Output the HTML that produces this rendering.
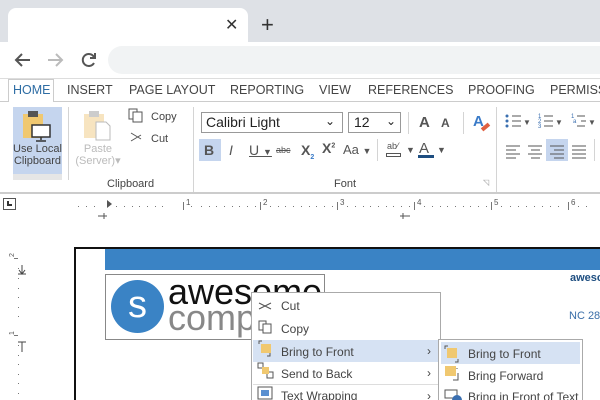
<!DOCTYPE html><html><head><style>
*{margin:0;padding:0;box-sizing:border-box}
html,body{width:600px;height:400px;overflow:hidden}
body{position:relative;font-family:"Liberation Sans",sans-serif;background:#fff;color:#444}
.a{position:absolute}
.t{font-size:12px;color:#444;white-space:nowrap}
.sep{position:absolute;width:1px;background:#d4d4d4}
</style></head><body>
<div class="a" style="left:0;top:0;width:600px;height:42px;background:#dee1e6"></div>
<div class="a" style="left:8px;top:8px;width:240px;height:36px;background:#fff;border-radius:8px 8px 0 0"></div>
<div class="a" style="left:225px;top:15px;font-size:16px;color:#333">✕</div>
<div class="a" style="left:261px;top:12px;font-size:22px;color:#333">+</div>
<svg class="a" style="left:12px;top:50px" width="90" height="20" viewBox="0 0 90 20"><g fill="none" stroke-width="2"><path d="M18 10H4M10 4L4 10l6 6" stroke="#555"/><path d="M36 10h14M44 4l6 6-6 6" stroke="#bbb"/><path d="M82 7a6 6 0 1 0 0 6" stroke="#555"/><path d="M83 3v5h-5" stroke="#555"/></g></svg>
<div class="a" style="left:108px;top:46px;width:492px;height:28px;background:#f1f3f4;border-radius:14px 0 0 14px"></div>
<div class="a" style="left:0;top:78px;width:600px;height:1px;background:#ddd"></div>
<div class="a" style="left:0;top:101px;width:600px;height:1px;background:#ccc"></div>
<div class="a" style="left:8px;top:79px;width:46px;height:23px;border:1px solid #ccc;border-bottom:none;background:#fff"></div>
<div class="a t" style="left:13px;top:83px;font-size:12.5px;color:#2e6da4">HOME</div>
<div class="a t" style="left:67px;top:83px;font-size:12.5px">INSERT</div>
<div class="a t" style="left:129px;top:83px;font-size:12.5px">PAGE LAYOUT</div>
<div class="a t" style="left:230px;top:83px;font-size:12.5px">REPORTING</div>
<div class="a t" style="left:319px;top:83px;font-size:12.5px">VIEW</div>
<div class="a t" style="left:368px;top:83px;font-size:12.5px">REFERENCES</div>
<div class="a t" style="left:468px;top:83px;font-size:12.5px">PROOFING</div>
<div class="a t" style="left:550px;top:83px;font-size:12.5px">PERMISSIONS</div>
<div class="a" style="left:13px;top:107px;width:49px;height:73px;background:#e6e6e6"></div>
<div class="a" style="left:13px;top:107px;width:49px;height:67px;background:#c5d5ee"></div>
<svg class="a" style="left:20px;top:110px" width="34" height="32"><rect x="3" y="4" width="20" height="24" fill="#f0c870"/><rect x="8" y="1" width="10" height="6" fill="#555"/><rect x="12" y="15" width="18" height="12" fill="#fff" stroke="#333" stroke-width="1.5"/><path d="M21 27v3M16 31h10" stroke="#333" stroke-width="1.5"/></svg>
<div class="a t" style="left:13px;top:143px;font-size:11px;width:49px;text-align:center;line-height:12px">Use Local<br>Clipboard</div>
<div class="sep" style="left:68px;top:107px;height:73px"></div>
<svg class="a" style="left:82px;top:110px" width="32" height="32"><rect x="2" y="4" width="20" height="24" fill="#f7e4c0"/><rect x="7" y="1" width="10" height="6" fill="#ccc"/><path d="M14 12h10l4 4v14H14z" fill="#fff" stroke="#bbb"/></svg>
<div class="a t" style="left:72px;top:143px;font-size:11px;width:52px;text-align:center;line-height:12px;color:#bbb">Paste<br>(Server)▾</div>
<svg class="a" style="left:128px;top:108px" width="16" height="40"><rect x="1" y="1" width="8" height="10" fill="none" stroke="#555"/><rect x="5" y="4" width="9" height="10" fill="#fff" stroke="#555"/><path d="M3 25l10 6M3 33l10-6" stroke="#555" fill="none"/></svg>
<div class="a t" style="left:151px;top:111px;font-size:11px">Copy</div>
<div class="a t" style="left:151px;top:133px;font-size:11px">Cut</div>
<div class="a t" style="left:107px;top:178px;font-size:11px">Clipboard</div>
<div class="sep" style="left:193px;top:107px;height:85px"></div>
<div class="a" style="left:201px;top:112px;width:142px;height:21px;border:1px solid #999"></div>
<div class="a t" style="left:206px;top:114px;font-size:14px;color:#222">Calibri Light</div>
<div class="a t" style="left:325px;top:114px;font-size:12px;color:#222">⌄</div>
<div class="a" style="left:348px;top:112px;width:53px;height:21px;border:1px solid #999"></div>
<div class="a t" style="left:354px;top:114px;font-size:14px;color:#222">12</div>
<div class="a t" style="left:386px;top:114px;font-size:12px;color:#222">⌄</div>
<div class="sep" style="left:408px;top:112px;height:22px"></div>
<div class="a t" style="left:419px;top:114px;font-size:15px;color:#555;font-weight:bold">A</div>
<div class="a t" style="left:441px;top:116px;font-size:12px;color:#555;font-weight:bold">A</div>
<div class="sep" style="left:463px;top:112px;height:22px"></div>
<div class="a t" style="left:473px;top:113px;font-size:15px;color:#3a7bc8;font-weight:bold">A</div>
<div class="a" style="left:481px;top:125px;width:9px;height:4px;background:#e06040;transform:rotate(-40deg)"></div>
<div class="a" style="left:199px;top:139px;width:22px;height:22px;background:#c5d5ee"></div>
<div class="a t" style="left:204px;top:142px;font-size:14px;font-weight:bold;color:#555">B</div>
<div class="a t" style="left:229px;top:142px;font-size:14px;font-style:italic;color:#555">I</div>
<div class="a t" style="left:249px;top:142px;font-size:14px;text-decoration:underline;color:#555">U <span style="font-size:9px">▼</span></div>
<div class="a t" style="left:276px;top:145px;font-size:9px;text-decoration:line-through;color:#555">abc</div>
<div class="a t" style="left:301px;top:142px;font-size:14px;color:#555;font-weight:bold">X<sub style="font-size:7px;color:#3a7bc8">2</sub></div>
<div class="a t" style="left:322px;top:140px;font-size:14px;color:#555;font-weight:bold">X<sup style="font-size:7px">2</sup></div>
<div class="a t" style="left:343px;top:142px;font-size:13px;color:#555">Aa <span style="font-size:9px">▼</span></div>
<div class="sep" style="left:377px;top:139px;height:22px"></div>
<div class="a t" style="left:387px;top:141px;font-size:9px;color:#555">ab⁄</div>
<div class="a" style="left:386px;top:153px;width:15px;height:4px;border:1px solid #555"></div>
<div class="a t" style="left:406px;top:145px;font-size:9px;color:#555">▼</div>
<div class="a t" style="left:419px;top:140px;font-size:15px;color:#555">A</div>
<div class="a" style="left:418px;top:155px;width:16px;height:3px;background:#1e4e80"></div>
<div class="a t" style="left:437px;top:145px;font-size:9px;color:#555">▼</div>
<div class="a t" style="left:334px;top:178px;font-size:11px">Font</div>
<div class="a t" style="left:483px;top:178px;font-size:8px;color:#999">◹</div>
<div class="sep" style="left:496px;top:107px;height:85px"></div>
<div class="a" style="left:546px;top:139px;width:22px;height:22px;background:#c5d5ee"></div>
<svg class="a" style="left:500px;top:110px" width="100" height="52"><g stroke="#555" fill="none">
<path d="M12 6h9M12 11h9M12 16h9M44 6h9M44 11h9M44 16h9M77 6h8M81 11h5M77 16h8"/>
<path d="M6 36h14M6 40h10M6 44h14M6 48h10M28 36h14M31 40h9M28 44h14M31 48h9M50 36h14M54 40h10M50 44h14M54 48h10M72 36h14M72 40h14M72 44h14M72 48h14"/></g>
<g fill="#3a6fb0"><circle cx="7" cy="6" r="1.5"/><circle cx="7" cy="11" r="1.5"/><circle cx="7" cy="16" r="1.5"/></g>
<g font-size="6" fill="#3a6fb0" font-family="Liberation Sans"><text x="38" y="8">1</text><text x="38" y="13">2</text><text x="38" y="18">3</text><text x="71" y="8">1</text><text x="73" y="13">a</text></g>
<g font-size="8" fill="#555"><text x="23" y="15">▼</text><text x="55" y="15">▼</text><text x="88" y="15">▼</text></g></svg>
<div class="sep" style="left:594px;top:139px;height:22px"></div>
<div class="a" style="left:0;top:192px;width:600px;height:2px;background:#ccc"></div>
<div class="a" style="left:3px;top:198px;width:13px;height:12px;border:1px solid #555"></div>
<div class="a" style="left:7px;top:201px;width:5px;height:5px;border-left:2px solid #333;border-bottom:2px solid #333"></div>
<svg class="a" style="left:70px;top:196px" width="530" height="24"><g fill="#777">
<rect x="8" y="10" width="1" height="1"/><rect x="16" y="10" width="1" height="1"/><rect x="24" y="10" width="1" height="1"/>
<rect x="46" y="10" width="1" height="1"/><rect x="54" y="10" width="1" height="1"/><rect x="62" y="10" width="1" height="1"/><rect x="69" y="10" width="1" height="1"/><rect x="77" y="10" width="1" height="1"/><rect x="85" y="10" width="1" height="1"/><rect x="92" y="10" width="1" height="1"/>
<rect x="121" y="10" width="1" height="1"/><rect x="131" y="10" width="1" height="1"/><rect x="139" y="10" width="1" height="1"/><rect x="146" y="10" width="1" height="1"/><rect x="154" y="10" width="1" height="1"/><rect x="162" y="10" width="1" height="1"/><rect x="169" y="10" width="1" height="1"/><rect x="177" y="10" width="1" height="1"/><rect x="185" y="10" width="1" height="1"/>
<rect x="200" y="10" width="1" height="1"/><rect x="208" y="10" width="1" height="1"/><rect x="215" y="10" width="1" height="1"/><rect x="223" y="10" width="1" height="1"/><rect x="231" y="10" width="1" height="1"/><rect x="239" y="10" width="1" height="1"/><rect x="246" y="10" width="1" height="1"/><rect x="254" y="10" width="1" height="1"/><rect x="262" y="10" width="1" height="1"/>
<rect x="277" y="10" width="1" height="1"/><rect x="285" y="10" width="1" height="1"/><rect x="293" y="10" width="1" height="1"/><rect x="300" y="10" width="1" height="1"/><rect x="308" y="10" width="1" height="1"/><rect x="316" y="10" width="1" height="1"/><rect x="323" y="10" width="1" height="1"/><rect x="331" y="10" width="1" height="1"/><rect x="339" y="10" width="1" height="1"/>
<rect x="354" y="10" width="1" height="1"/><rect x="362" y="10" width="1" height="1"/><rect x="370" y="10" width="1" height="1"/><rect x="377" y="10" width="1" height="1"/><rect x="385" y="10" width="1" height="1"/><rect x="393" y="10" width="1" height="1"/><rect x="400" y="10" width="1" height="1"/><rect x="408" y="10" width="1" height="1"/><rect x="416" y="10" width="1" height="1"/>
<rect x="431" y="10" width="1" height="1"/><rect x="440" y="10" width="1" height="1"/><rect x="448" y="10" width="1" height="1"/><rect x="456" y="10" width="1" height="1"/><rect x="464" y="10" width="1" height="1"/><rect x="472" y="10" width="1" height="1"/><rect x="480" y="10" width="1" height="1"/><rect x="488" y="10" width="1" height="1"/><rect x="508" y="10" width="1" height="1"/><rect x="516" y="10" width="1" height="1"/>
<rect x="113" y="6" width="1" height="8"/><rect x="190" y="6" width="1" height="8"/><rect x="267" y="6" width="1" height="8"/><rect x="344" y="6" width="1" height="8"/><rect x="421" y="6" width="1" height="8"/><rect x="498" y="6" width="1" height="8"/></g>
<g font-size="8" fill="#555" font-family="Liberation Sans"><text x="116" y="9">1</text><text x="193" y="9">2</text><text x="270" y="9">3</text><text x="347" y="9">4</text><text x="424" y="9">5</text><text x="501" y="9">6</text></g>
<path d="M37 4v8l5-4z" fill="#555"/><path d="M28 20h9M34 17v6" stroke="#555"/><path d="M330 20h10M333 17v6" stroke="#555"/></svg>
<svg class="a" style="left:5px;top:250px" width="30" height="150"><g fill="#777"><rect x="9" y="8" width="4" height="1"/><rect x="13" y="18" width="1" height="1"/><rect x="13" y="28" width="1" height="1"/><rect x="13" y="38" width="1" height="1"/><rect x="13" y="47" width="1" height="1"/><rect x="13" y="57" width="1" height="1"/><rect x="13" y="66" width="1" height="1"/><rect x="9" y="85" width="4" height="1"/><rect x="13" y="95" width="1" height="1"/><rect x="13" y="105" width="1" height="1"/><rect x="13" y="114" width="1" height="1"/><rect x="13" y="124" width="1" height="1"/><rect x="13" y="133" width="1" height="1"/><rect x="13" y="143" width="1" height="1"/></g>
<text x="3" y="7" font-size="7" fill="#555" transform="rotate(-90 6 4)">2</text><text x="3" y="85" font-size="7" fill="#555" transform="rotate(-90 6 82)">1</text>
<path d="M17 15v9M13 24h8M14 20l3 4 3-4" stroke="#444" fill="none"/><path d="M17 92v10M13 92h8" stroke="#444" fill="none"/></svg>
<div class="a" style="left:74px;top:247px;width:526px;height:153px;border:2px solid #111;border-right:none;border-bottom:none"></div>
<div class="a" style="left:105px;top:249px;width:495px;height:21px;background:#3a83c5"></div>
<div class="a" style="left:105px;top:274px;width:220px;height:66px;border:1px solid #888"></div>
<div class="a" style="left:111px;top:280px;width:53px;height:53px;border-radius:50%;background:#3a83c5;color:#fff;font-size:38px;text-align:center;line-height:50px">s</div>
<div class="a" style="left:168px;top:274px;font-size:36px;color:#111;line-height:36px;white-space:nowrap">awesome</div>
<div class="a" style="left:168px;top:300px;font-size:36px;color:#888;line-height:36px;white-space:nowrap">company</div>
<div class="a t" style="left:570px;top:272px;font-size:11px;color:#1e4e80;font-weight:bold">awesome</div>
<div class="a t" style="left:569px;top:310px;font-size:11px;color:#3a6ea8">NC 28</div>
<div class="a" style="left:251px;top:292px;width:190px;height:110px;background:#fff;border:1px solid #aaa"></div>
<div class="a" style="left:253px;top:340px;width:186px;height:22px;background:#d6e2f3"></div>
<div class="a" style="left:253px;top:384px;width:186px;height:1px;background:#ddd"></div>
<div class="a t" style="left:281px;top:299px">Cut</div>
<div class="a t" style="left:281px;top:322px">Copy</div>
<div class="a t" style="left:281px;top:345px">Bring to Front</div>
<div class="a t" style="left:281px;top:367px">Send to Back</div>
<div class="a t" style="left:281px;top:389px">Text Wrapping</div>
<div class="a t" style="left:427px;top:344px">›</div><div class="a t" style="left:427px;top:366px">›</div><div class="a t" style="left:427px;top:389px">›</div>
<svg class="a" style="left:256px;top:297px" width="20" height="103"><g stroke="#555" fill="none"><path d="M3 6l12 6M3 12l12-6"/><rect x="3" y="24" width="7" height="9"/><rect x="7" y="27" width="8" height="9" fill="#fff"/><path d="M3 47v-3h3M14 56v3h-3"/><rect x="2" y="66" width="5" height="5" fill="#fff"/><rect x="11" y="75" width="6" height="6" fill="#fff"/><rect x="2" y="90" width="14" height="12"/></g><rect x="5" y="47" width="10" height="9" fill="#f0c870"/><rect x="6" y="70" width="7" height="7" fill="#f0c870"/><rect x="5" y="93" width="8" height="6" fill="#5a8fd0"/></svg>
<div class="a" style="left:438px;top:339px;width:145px;height:65px;background:#fff;border:1px solid #aaa"></div>
<div class="a" style="left:441px;top:342px;width:139px;height:22px;background:#d6e2f3"></div>
<div class="a t" style="left:468px;top:347px">Bring to Front</div>
<div class="a t" style="left:468px;top:369px">Bring Forward</div>
<div class="a t" style="left:468px;top:390px">Bring in Front of Text</div>
<svg class="a" style="left:443px;top:344px" width="20" height="56"><g stroke="#555" fill="none"><path d="M2 5V2h3M15 15v3h-3M14 25v-1M10 36h5v-7"/></g><rect x="4" y="4" width="10" height="10" fill="#f0c870"/><rect x="2" y="22" width="11" height="10" fill="#f0c870"/><rect x="2" y="46" width="12" height="8" fill="none" stroke="#555"/><circle cx="14" cy="56" r="5" fill="#3a6fb0"/></svg>
</body></html>
